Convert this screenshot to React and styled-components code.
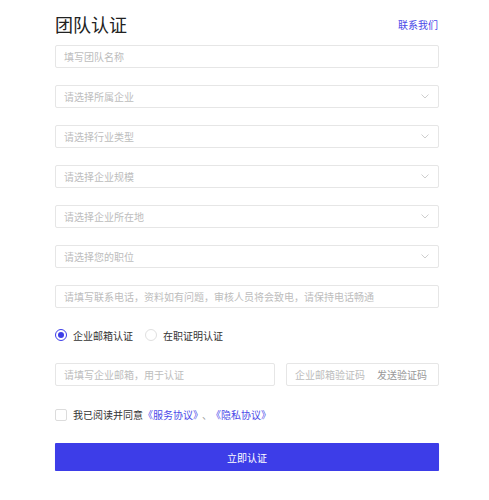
import styled, { createGlobalStyle } from "styled-components";

const GlobalStyle = createGlobalStyle`
  html, body {
    margin: 0;
    padding: 0;
    background: #fff;
  }
  body {
    font-family: "Noto Sans CJK SC", "Noto Sans", sans-serif;
  }
`;

const Page = styled.div`
  width: 384px;
  padding: 11px 0 0 55px;
  display: flex;
  flex-direction: column;
`;

const Header = styled.div`
  display: flex;
  align-items: center;
  justify-content: space-between;
  height: 26px;
  margin-bottom: 8px;
`;

const Title = styled.h1`
  margin: 0;
  font-size: 18px;
  font-weight: normal;
  color: #222;
  line-height: 26px;
`;

const Contact = styled.a`
  font-size: 10px;
  color: #4a4ae8;
  text-decoration: none;
  margin-right: 1px;
`;

const Fields = styled.div`
  display: flex;
  flex-direction: column;
  gap: 17px;
`;

const Box = styled.div`
  box-sizing: border-box;
  height: 23px;
  border: 1px solid #e6e6e6;
  border-radius: 2px;
  display: flex;
  align-items: center;
  justify-content: space-between;
  padding: 0 9px 0 8px;
  width: ${({ $w }) => $w || "100%"};
`;

const Placeholder = styled.span`
  font-size: 10px;
  color: #bdbdbd;
  white-space: nowrap;
`;

const SendCode = styled.span`
  font-size: 10px;
  color: #999;
  margin-right: 2px;
`;

const Chevron = () => (
  <svg width="8" height="5" viewBox="0 0 8 5">
    <path d="M0.5 0.5 L4 4 L7.5 0.5" fill="none" stroke="#c8c8c8" strokeWidth="0.9" />
  </svg>
);

const RadioRow = styled.div`
  display: flex;
  align-items: center;
  gap: 12px;
  height: 24px;
  margin-top: 15px;
`;

const RadioItem = styled.label`
  display: flex;
  align-items: center;
  gap: 6px;
  font-size: 10px;
  color: #333;
`;

const RadioCircle = styled.span`
  box-sizing: border-box;
  width: 12px;
  height: 12px;
  border-radius: 50%;
  border: 1px solid ${({ $on }) => ($on ? "#3d3de8" : "#e0e0e0")};
  display: flex;
  align-items: center;
  justify-content: center;

  &::after {
    content: "";
    width: 6px;
    height: 6px;
    border-radius: 50%;
    background: ${({ $on }) => ($on ? "#3d3de8" : "transparent")};
  }
`;

const CodeRow = styled.div`
  display: flex;
  justify-content: space-between;
  margin-top: 16px;
`;

const AgreeRow = styled.div`
  display: flex;
  align-items: center;
  gap: 6px;
  margin-top: 21px;
  font-size: 10px;
  color: #333;
`;

const CheckBox = styled.span`
  box-sizing: border-box;
  width: 12px;
  height: 12px;
  border: 1px solid #dcdcdc;
  border-radius: 2px;
`;

const Link = styled.a`
  color: #4a4ae8;
  text-decoration: none;
`;

const Sep = styled.span`
  color: #999;
  margin: 0 4px;
`;

const Submit = styled.button`
  margin-top: 21px;
  height: 28px;
  width: 100%;
  border: none;
  border-radius: 1px;
  background: #3d3de8;
  color: #fff;
  font-family: inherit;
  font-size: 10px;
  box-shadow: 0 1px 1px rgba(61, 61, 232, 0.25);
`;

const fields = [
  { text: "填写团队名称" },
  { text: "请选择所属企业", select: true },
  { text: "请选择行业类型", select: true },
  { text: "请选择企业规模", select: true },
  { text: "请选择企业所在地", select: true },
  { text: "请选择您的职位", select: true },
  { text: "请填写联系电话，资料如有问题，审核人员将会致电，请保持电话畅通" },
];

export default function App() {
  return (
    <>
      <GlobalStyle />
      <Page>
        <Header>
          <Title>团队认证</Title>
          <Contact href="#">联系我们</Contact>
        </Header>
        <Fields>
          {fields.map((f) => (
            <Box key={f.text}>
              <Placeholder>{f.text}</Placeholder>
              {f.select && <Chevron />}
            </Box>
          ))}
        </Fields>
        <RadioRow>
          <RadioItem>
            <RadioCircle $on />
            企业邮箱认证
          </RadioItem>
          <RadioItem>
            <RadioCircle />
            在职证明认证
          </RadioItem>
        </RadioRow>
        <CodeRow>
          <Box $w="220px">
            <Placeholder>请填写企业邮箱，用于认证</Placeholder>
          </Box>
          <Box $w="153px">
            <Placeholder>企业邮箱验证码</Placeholder>
            <SendCode>发送验证码</SendCode>
          </Box>
        </CodeRow>
        <AgreeRow>
          <CheckBox />
          <span>
            我已阅读并同意
            <Link href="#">《服务协议》</Link>
            <Sep>、</Sep>
            <Link href="#">《隐私协议》</Link>
          </span>
        </AgreeRow>
        <Submit>立即认证</Submit>
      </Page>
    </>
  );
}
